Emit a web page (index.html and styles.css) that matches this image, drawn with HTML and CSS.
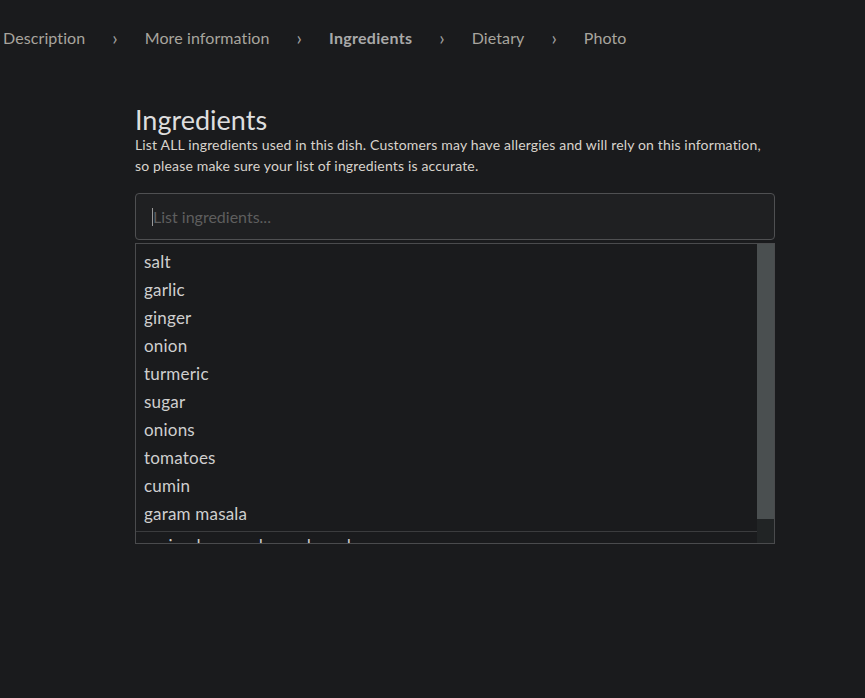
FILE: index.html
```html
<!DOCTYPE html>
<html>
<head>
<meta charset="utf-8">
<link rel="stylesheet" href="styles.css">
</head>
<body>
<nav class="steps">
  <span class="step">Description</span>
  <span class="sep">›</span>
  <span class="step">More information</span>
  <span class="sep">›</span>
  <span class="step active">Ingredients</span>
  <span class="sep">›</span>
  <span class="step">Dietary</span>
  <span class="sep">›</span>
  <span class="step">Photo</span>
</nav>
<main class="panel">
  <h1 class="title">Ingredients</h1>
  <p class="desc">List ALL ingredients used in this dish. Customers may have allergies and will rely on this information, so please make sure your list of ingredients is accurate.</p>
  <div class="field"><span class="caret"></span><span class="placeholder">List ingredients...</span></div>
  <div class="listbox">
    <ul class="list">
      <li>salt</li>
      <li>garlic</li>
      <li>ginger</li>
      <li>onion</li>
      <li>turmeric</li>
      <li>sugar</li>
      <li>onions</li>
      <li>tomatoes</li>
      <li>cumin</li>
      <li>garam masala</li>
      <li class="more">coriander powder and seeds</li>
    </ul>
    <div class="scrollbar"><div class="thumb"></div></div>
  </div>
</main>
</body>
</html>
```
FILE: styles.css
```css
html, body {
  margin: 0;
  padding: 0;
  background: #1a1b1d;
  height: 100%;
}
body {
  font-family: Lato, "Liberation Sans", sans-serif;
  color: #d6d6d6;
}
.steps {
  display: flex;
  align-items: center;
  gap: 27px;
  padding: 26px 0 0 3px;
  height: 22px;
  font-size: 16px;
  letter-spacing: 0.1px;
  color: #a8a59e;
}
.step.active {
  font-weight: 700;
  color: #a9a9a9;
  letter-spacing: 0.3px;
}
.sep {
  font-size: 19px;
  color: #a0a0a0;
}
.panel {
  width: 640px;
  margin: 57px 0 0 135px;
}
.title {
  margin: 0;
  font-size: 27px;
  font-weight: 400;
  line-height: 30px;
  color: #dedede;
}
.desc {
  margin: -1px 0 0;
  font-size: 14px;
  line-height: 21px;
  letter-spacing: 0.16px;
  color: #d8d3cc;
}
.field {
  margin-top: 17px;
  height: 45px;
  border: 1px solid #4f5052;
  border-radius: 4px;
  background: #1f2022;
  display: flex;
  align-items: center;
  padding-left: 16px;
  font-size: 16px;
}
.caret {
  width: 1px;
  height: 18px;
  background: #9a9a9a;
}
.placeholder {
  color: #5e5e5e;
}
.listbox {
  margin-top: 3px;
  height: 299px;
  border: 1px solid #4a4b4d;
  display: flex;
  background: #1a1b1d;
}
.list {
  flex: 1;
  list-style: none;
  margin: 0;
  padding: 4px 0 0;
  overflow: hidden;
  font-size: 17px;
  letter-spacing: 0.2px;
  color: #cfcfcf;
}
.list li {
  height: 28px;
  line-height: 28px;
  padding-left: 8px;
}
.list li.more {
  margin-top: 3px;
  border-top: 1px solid #3b3c3e;
  height: 32px;
}
.scrollbar {
  width: 17px;
  background: #212425;
}
.thumb {
  height: 275px;
  background: #4a4f50;
}
```
